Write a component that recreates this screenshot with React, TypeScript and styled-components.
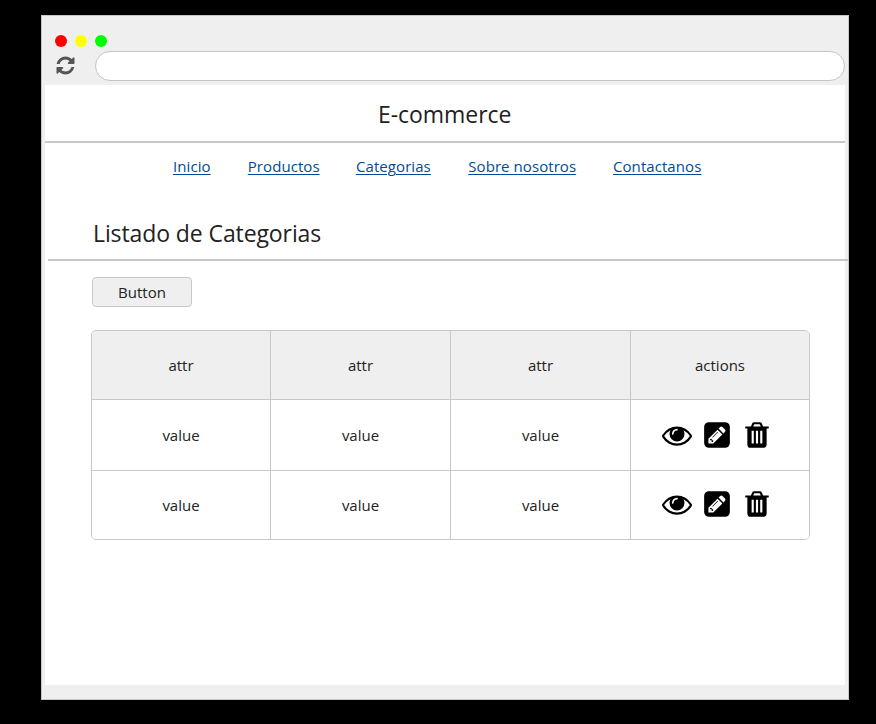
import React from "react";
import styled, { createGlobalStyle } from "styled-components";

const GlobalStyle = createGlobalStyle`
  * { box-sizing: border-box; }
  body {
    margin: 0;
    background: #000;
    color: #222;
    font-family: "Open Sans", "Noto Sans", sans-serif;
    font-size: 15px;
    line-height: 20px;
  }
`;

const Desktop = styled.div`
  height: 724px;
  padding: 15px 27px 24px 41px;
  background: #000;
`;

const BrowserWindow = styled.div`
  width: 808px;
  height: 685px;
  border: 1px solid #c8c8c8;
  background: #efefef;
  padding: 0 3px;
`;

const Chrome = styled.header`
  height: 69px;
  padding-top: 19px;
`;

const Lights = styled.div`
  display: flex;
  gap: 8px;
  padding-left: 10px;
`;

const Light = styled.span<{ $color: string }>`
  width: 12px;
  height: 12px;
  border-radius: 50%;
  background: ${(p) => p.$color};
`;

const AddressRow = styled.div`
  display: flex;
  align-items: flex-start;
  padding-left: 10px;
  margin-top: 4px;
`;

const Reload = styled.div`
  width: 21px;
  padding-top: 4px;
`;

const AddressBar = styled.div`
  width: 750px;
  height: 30px;
  margin-left: 19px;
  border: 1px solid #c4c4c4;
  border-radius: 15px;
  background: #fff;
`;

const Icon = styled.svg<{ $size: number; $color: string }>`
  display: block;
  flex: none;
  width: ${(p) => p.$size}px;
  height: ${(p) => p.$size}px;
  fill: ${(p) => p.$color};
`;

const Page = styled.main`
  width: 800px;
  height: 600px;
  background: #fff;
`;

const SiteTitle = styled.h1`
  height: 58px;
  margin: 0;
  padding-left: 333px;
  border-bottom: 2px solid #c8c8c8;
  font-size: 23px;
  font-weight: 400;
  line-height: 58px;
  letter-spacing: -0.05px;
`;

const Nav = styled.nav`
  display: flex;
  justify-content: space-between;
  width: 528px;
  margin-left: 128px;
  padding-top: 13px;
`;

const NavLink = styled.a<{ $width: number }>`
  width: ${(p) => p.$width}px;
  color: #004b99;
  letter-spacing: 0.07px;
  text-decoration: underline;
  text-underline-offset: 2px;
  text-decoration-thickness: 1px;
  white-space: nowrap;
`;

const SectionTitle = styled.h2`
  width: 800px;
  height: 58px;
  margin: 27px 0 0 3px;
  padding-left: 45px;
  border-bottom: 2px solid #c8c8c8;
  font-size: 23px;
  font-weight: 400;
  line-height: 61px;
  letter-spacing: -0.1px;
`;

const Button = styled.button`
  display: block;
  width: 100px;
  height: 30px;
  margin: 16px 0 23px 47px;
  padding: 0;
  border: 1px solid #c8c8c8;
  border-radius: 4px;
  background: #efefef;
  color: #222;
  font: inherit;
`;

const Table = styled.div`
  display: grid;
  grid-template-columns: 179px 180px 180px 178px;
  grid-template-rows: 69px 71px 68px;
  width: 719px;
  margin-left: 46px;
  border: 1px solid #c8c8c8;
  border-radius: 5px;
  overflow: hidden;
`;

const Cell = styled.div<{ $header?: boolean; $lastColumn?: boolean; $lastRow?: boolean }>`
  display: flex;
  align-items: center;
  justify-content: center;
  border-right: ${(p) => (p.$lastColumn ? 0 : 1)}px solid #c8c8c8;
  border-bottom: ${(p) => (p.$lastRow ? 0 : 1)}px solid #c8c8c8;
  background: ${(p) => (p.$header ? "#efefef" : "#fff")};
`;

const Actions = styled.div<{ $lift: number }>`
  display: flex;
  gap: 10px;
  margin-right: 6px;
  margin-bottom: ${(p) => p.$lift}px;
`;

const icons = {
  refresh:
    "M1639 1056q0 5-1 7-64 268-268 434.5t-478 166.5q-146 0-282.5-55t-243.5-157l-129 129q-19 19-45 19t-45-19-19-45v-448q0-26 19-45t45-19h448q26 0 45 19t19 45-19 45l-137 137q71 66 161 102t187 36q134 0 250-65t186-179q11-17 53-117 8-23 30-23h192q13 0 22.5 9.5t9.5 22.5zm25-800v448q0 26-19 45t-45 19h-448q-26 0-45-19t-19-45 19-45l138-138q-148-137-349-137-134 0-250 65t-186 179q-11 17-53 117-8 23-30 23h-199q-13 0-22.5-9.5t-9.5-22.5v-7q65-268 270-434.5t480-166.5q146 0 284 55.5t245 156.5l130-129q19-19 45-19t45 19 19 45z",
  eye:
    "M1664 960q-152-236-381-353 61 104 61 225 0 185-131.5 316.5t-316.5 131.5-316.5-131.5-131.5-316.5q0-121 61-225-229 117-381 353 133 205 333.5 326.5t434.5 121.5 434.5-121.5 333.5-326.5zm-720-384q0-20-14-34t-34-14q-125 0-214.5 89.5t-89.5 214.5q0 20 14 34t34 14 34-14 14-34q0-86 61-147t147-61q20 0 34-14t14-34zm848 384q0 34-20 69-140 230-376.5 368.5t-499.5 138.5-499.5-139-376.5-368q-20-35-20-69t20-69q140-229 376.5-368t499.5-139 499.5 139 376.5 368q20 35 20 69z",
  edit:
    "M532 1108l152 152-52 52h-56v-96h-96v-56zM946 718q14 13-3 30l-291 291q-17 17-30 3-14-13 3-30l291-291q17-17 30-3zM672 1408l544-544-288-288-544 544v288h288zM1280 800l92-92q28-28 28-68t-28-68l-152-152q-28-28-68-28t-68 28l-92 92zM1664 416v960q0 119-84.5 203.5t-203.5 84.5h-960q-119 0-203.5-84.5t-84.5-203.5v-960q0-119 84.5-203.5t203.5-84.5h960q119 0 203.5 84.5t84.5 203.5z",
  trash:
    "M704 1376v-704q0-14-9-23t-23-9h-64q-14 0-23 9t-9 23v704q0 14 9 23t23 9h64q14 0 23-9t9-23zm256 0v-704q0-14-9-23t-23-9h-64q-14 0-23 9t-9 23v704q0 14 9 23t23 9h64q14 0 23-9t9-23zm256 0v-704q0-14-9-23t-23-9h-64q-14 0-23 9t-9 23v704q0 14 9 23t23 9h64q14 0 23-9t9-23zm-544-992h448l-48-117q-7-9-17-11h-317q-10 2-17 11zm928 32v64q0 14-9 23t-23 9h-96v948q0 83-47 143.5t-113 60.5h-832q-66 0-113-58.5t-47-141.5v-952h-96q-14 0-23-9t-9-23v-64q0-14 9-23t23-9h309l70-167q15-37 54-63t79-26h320q40 0 79 26t54 63l70 167h309q14 0 23 9t9 23z",
};

function Glyph({ name, size = 30, color = "#000" }: { name: keyof typeof icons; size?: number; color?: string }) {
  return (
    <Icon viewBox="0 0 1792 1792" $size={size} $color={color} aria-hidden="true">
      <path fillRule="evenodd" d={icons[name]} />
    </Icon>
  );
}

const links = [
  { label: "Inicio", width: 38 },
  { label: "Productos", width: 71.5 },
  { label: "Categorias", width: 75.5 },
  { label: "Sobre nosotros", width: 108 },
  { label: "Contactanos", width: 88 },
];

const headers = ["attr", "attr", "attr", "actions"];
const rows = [
  ["value", "value", "value"],
  ["value", "value", "value"],
];

export default function App() {
  return (
    <>
      <GlobalStyle />
      <Desktop>
        <BrowserWindow>
          <Chrome>
            <Lights>
              <Light $color="#ff0000" />
              <Light $color="#ffff00" />
              <Light $color="#00ff00" />
            </Lights>
            <AddressRow>
              <Reload>
                <Glyph name="refresh" size={21} color="#555" />
              </Reload>
              <AddressBar />
            </AddressRow>
          </Chrome>
          <Page>
            <SiteTitle>E-commerce</SiteTitle>
            <Nav>
              {links.map((link) => (
                <NavLink key={link.label} href="#" $width={link.width}>
                  {link.label}
                </NavLink>
              ))}
            </Nav>
            <SectionTitle>Listado de Categorias</SectionTitle>
            <Button>Button</Button>
            <Table>
              {headers.map((label, i) => (
                <Cell key={i} $header $lastColumn={i === 3}>
                  {label}
                </Cell>
              ))}
              {rows.map((row, r) => (
                <React.Fragment key={r}>
                  {row.map((value, c) => (
                    <Cell key={c} $lastRow={r === 1}>
                      {value}
                    </Cell>
                  ))}
                  <Cell $lastColumn $lastRow={r === 1}>
                    <Actions $lift={r === 1 ? 2 : 0}>
                      <Glyph name="eye" />
                      <Glyph name="edit" />
                      <Glyph name="trash" />
                    </Actions>
                  </Cell>
                </React.Fragment>
              ))}
            </Table>
          </Page>
        </BrowserWindow>
      </Desktop>
    </>
  );
}
